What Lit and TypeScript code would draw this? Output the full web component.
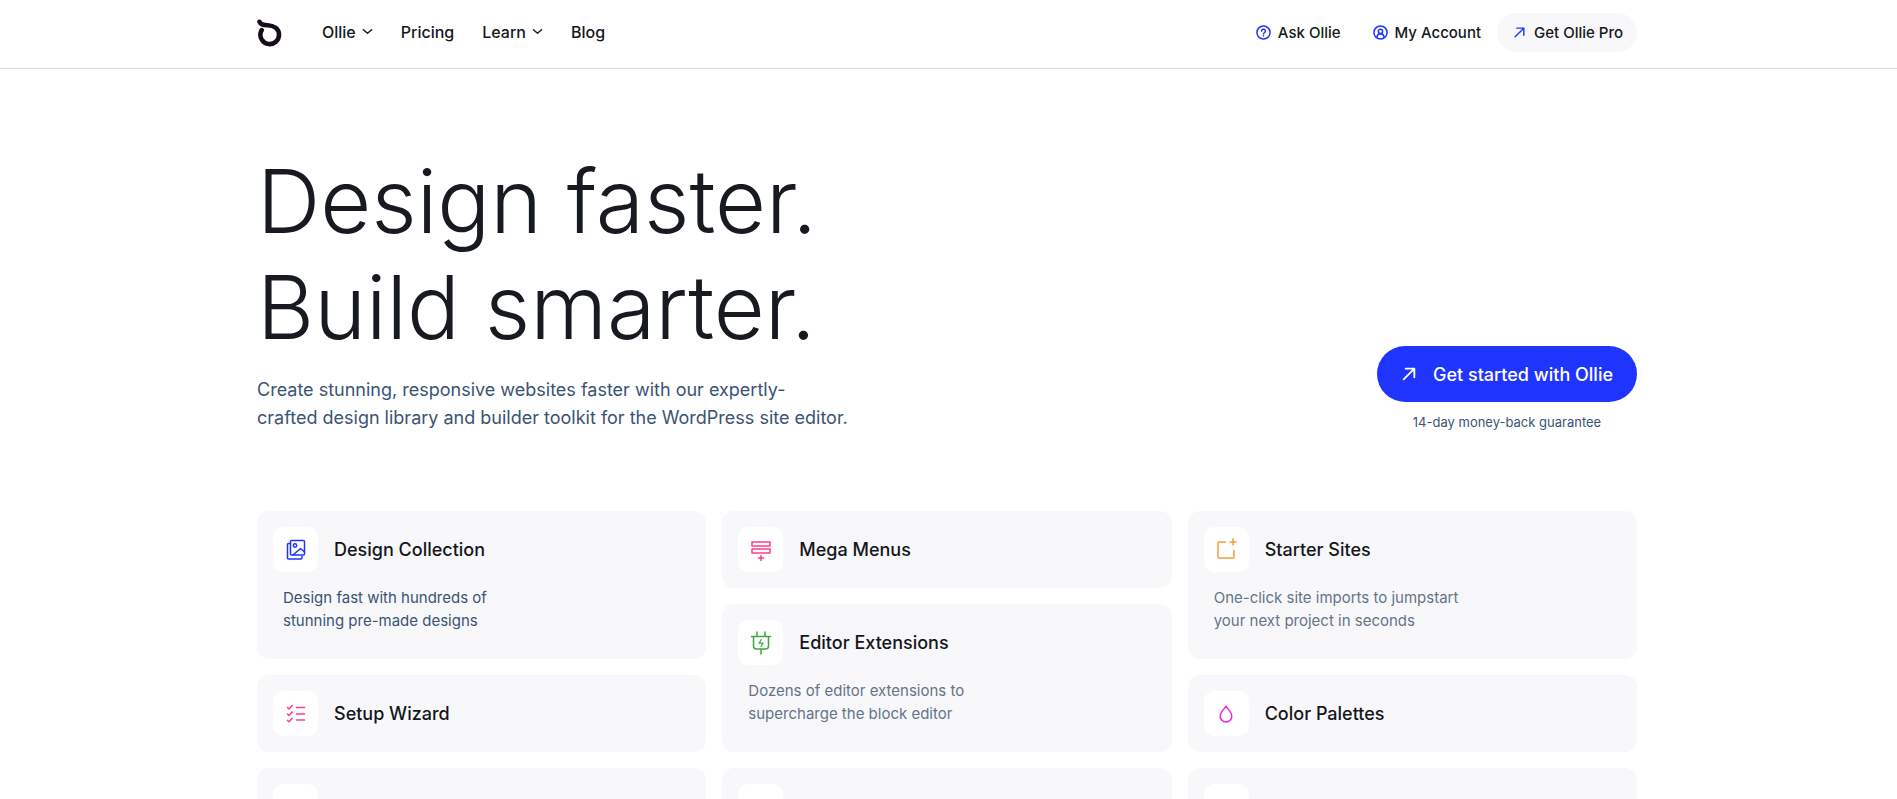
import { LitElement, html, css, svg, nothing } from "lit";
import { customElement } from "lit/decorators.js";

const icon = (body: unknown, size = 24, stroke = 1.5) => html`<svg
  class="icon" width=${size} height=${size} viewBox="0 0 24 24" fill="none"
  stroke="currentColor" stroke-width=${stroke} stroke-linecap="round" stroke-linejoin="round" aria-hidden="true"
>${body}</svg>`;

const arrow = svg`<path d="M4 20 20 4M7 4h13v13"/>`;
const chevron = svg`<path d="m3 8 9 8 9-8"/>`;
const help = svg`<circle cx="12" cy="12" r="10.5"/><path d="M9 9.8a3 3 0 1 1 4.6 2.5c-1 .6-1.6 1-1.6 2"/><path d="M12 17.3v.2"/>`;
const user = svg`<circle cx="12" cy="12" r="10.5"/><circle cx="12" cy="10.2" r="3.4"/><path d="M6.6 19.5v-1a4.5 4.5 0 0 1 4.5-4.2h1.8a4.5 4.5 0 0 1 4.5 4.2v1"/>`;

const images = svg`<rect x="6.5" y="2.5" width="14" height="14.5" rx="1"/><circle cx="11" cy="7.5" r="1.7"/><path d="m9 17 7.500-6.500 4 3.500"/><path d="M6.500 5.500h-2a1 1 0 0 0-1 1v13.500a1 1 0 0 0 1 1H17a1 1 0 0 0 1-1v-1.500"/>`;
const checks = svg`<path d="M12.500 5.500h8M12.500 12h8M12.500 18h8M3.500 5.500 5 7l3.200-3.500M3.500 12 5 13.500l3.200-3.500M3.500 18.200l1.500 1.500 3.200-3.500"/>`;
const menus = svg`<rect x="3" y="4" width="18" height="4"/><rect x="3" y="11" width="18" height="4"/><path d="M12 17.500v5M9.500 20h5"/>`;
const plug = svg`<path d="M2.500 5.500h19M8 1v4.500M16 1v4.500M4.500 5.500V15a3 3 0 0 0 3 3h9a3 3 0 0 0 3-3V5.500M12 18v5"/><path d="m12.300 8.500-2.300 3.700h4l-2 3.300" stroke-width="1.200"/>`;
const siteAdd = svg`<path d="M11.500 4H5a1 1 0 0 0-1 1v14a1 1 0 0 0 1 1h14a1 1 0 0 0 1-1v-6.500M19 1v6M16 4h6"/>`;
const drop = svg`<path d="M12 4.200c3 4 5.800 6.800 5.800 10a5.800 5.800 0 0 1-11.600 0c0-3.200 2.800-6 5.800-10Z"/>`;

interface Feature { title: string; lines?: string[]; tone: string; art: unknown; strong?: boolean }

const columns: (Feature | null)[][] = [
  [
    { title: "Design Collection", lines: ["Design fast with hundreds of", "stunning pre-made designs"], tone: "blue", art: images, strong: true },
    { title: "Setup Wizard", tone: "pink", art: checks },
    null,
  ],
  [
    { title: "Mega Menus", tone: "pink", art: menus },
    { title: "Editor Extensions", lines: ["Dozens of editor extensions to", "supercharge the block editor"], tone: "green", art: plug },
    null,
  ],
  [
    { title: "Starter Sites", lines: ["One-click site imports to jumpstart", "your next project in seconds"], tone: "orange", art: siteAdd },
    { title: "Color Palettes", tone: "magenta", art: drop },
    null,
  ],
];

@customElement("feature-card")
export class FeatureCard extends LitElement {
  static properties = { feature: { attribute: false } };
  declare feature: Feature | null;

  static styles = css`
    :host { display: block; background: #f8f8fa; border-radius: 12px; padding: 16px; }
    .head { display: flex; align-items: center; gap: 16px; }
    .tile { display: flex; align-items: center; justify-content: center; width: 45px; height: 45px; background: #fff; border-radius: 10px; }
    h2 { margin: 0; font-size: 18px; line-height: 24px; font-weight: 500; color: #14171c; }
    p { margin: 14px 10px 11px; font-size: 15px; line-height: 23px; color: #64748b; }
    .strong { color: #3b5374; }
    .blue { color: #1f35ff; }
    .pink { color: #ff3d8b; }
    .green { color: #3ea63e; }
    .orange { color: #ff9838; }
    .magenta { color: #f01ff0; }
  `;

  render() {
    const f = this.feature;
    return html`
      <div class="head">
        <span class="tile ${f?.tone ?? ""}">${f ? icon(f.art) : nothing}</span>
        ${f ? html`<h2>${f.title}</h2>` : nothing}
      </div>
      ${f?.lines ? html`<p class=${f.strong ? "strong" : ""}>${f.lines[0]}<br>${f.lines[1]}</p>` : nothing}
    `;
  }
}

@customElement("app-root")
export class AppRoot extends LitElement {
  static styles = css`
    :host { display: block; height: 100vh; overflow: hidden; background: #fff; color: #14171c; font-family: Inter, "Liberation Sans", sans-serif; }
    a { color: inherit; text-decoration: none; }
    header { border-bottom: 1px solid #d8dce5; padding: 13px 27px 16px 24px; }
    main { padding: 0 27px 0 24px; }
    .wrap { max-width: 1380px; margin: 0 auto; }
    .bar { display: flex; align-items: center; justify-content: space-between; }
    .left, .menu, .right, .left button, .right a, .cta { display: flex; align-items: center; }
    .left { gap: 40px; }
    .logo { display: flex; }
    .menu { gap: 28px; padding-bottom: 2px; font-size: 16px; line-height: 24px; font-weight: 500; }
    button { border: 0; background: none; padding: 0; font: inherit; color: inherit; gap: 6px; }
    .right { font-size: 15px; line-height: 23px; font-weight: 500; }
    .right a { gap: 7px; padding: 8px 16px; }
    .right .icon { color: #1f35ff; }
    .right .pro { gap: 8px; background: #f8f8fa; border-radius: 20px; padding: 8px 14px 8px 16px; }
    .hero { display: flex; align-items: flex-end; justify-content: space-between; padding: 79px 0; }
    h1 { margin: 0; font-size: 88px; line-height: 106px; font-weight: 350; color: #171b21; }
    .lead { margin: 16px 0 0; font-size: 18px; line-height: 28px; color: #3b5374; }
    .action { display: flex; flex-direction: column; align-items: center; }
    .cta { height: 56px; box-sizing: border-box; padding: 0 24px; gap: 16px; border-radius: 28px; background: #1f35ff; color: #fff; font-size: 18px; font-weight: 500; }
    .note { margin: 10px 0 0; font-size: 13px; line-height: 20px; color: #3b5374; }
    .grid { display: grid; grid-template-columns: repeat(3, 1fr); gap: 16px; align-items: start; }
    .column { display: grid; gap: 16px; }
  `;

  render() {
    return html`
      <header>
        <div class="wrap bar">
          <div class="left">
            <a class="logo" href="#" aria-label="Ollie home">
              <svg width="25" height="28" viewBox="0 0 25 28" fill="none" stroke="#150d1c" stroke-width="4.6" stroke-linecap="round" aria-hidden="true">
                <path d="M2.500 2.800c1 3 4 3.300 8 3.500 6.500.3 11.500 3.500 11.500 9.500a9.300 9.300 0 1 1-18.300-2.300c.3-1.200.6-1.800 1-2.400"/>
              </svg>
            </a>
            <nav class="menu">
              <button type="button">Ollie ${icon(chevron, 11, 3)}</button>
              <a href="#">Pricing</a>
              <button type="button">Learn ${icon(chevron, 11, 3)}</button>
              <a href="#">Blog</a>
            </nav>
          </div>
          <nav class="right">
            <a href="#">${icon(help, 15, 2.4)}Ask Ollie</a>
            <a href="#">${icon(user, 15, 2.4)}My Account</a>
            <a class="pro" href="#">${icon(arrow, 13, 2.6)}Get Ollie Pro</a>
          </nav>
        </div>
      </header>
      <main>
        <div class="wrap">
          <section class="hero">
            <div>
              <h1>Design faster.<br>Build smarter.</h1>
              <p class="lead">Create stunning, responsive websites faster with our expertly-<br>crafted design library and builder toolkit for the WordPress site editor.</p>
            </div>
            <div class="action">
              <a class="cta" href="#">${icon(arrow, 16, 2.8)}Get started with Ollie</a>
              <p class="note">14-day money-back guarantee</p>
            </div>
          </section>
          <section class="grid">
            ${columns.map((c) => html`<div class="column">${c.map((f) => html`<feature-card .feature=${f}></feature-card>`)}</div>`)}
          </section>
        </div>
      </main>
    `;
  }
}
